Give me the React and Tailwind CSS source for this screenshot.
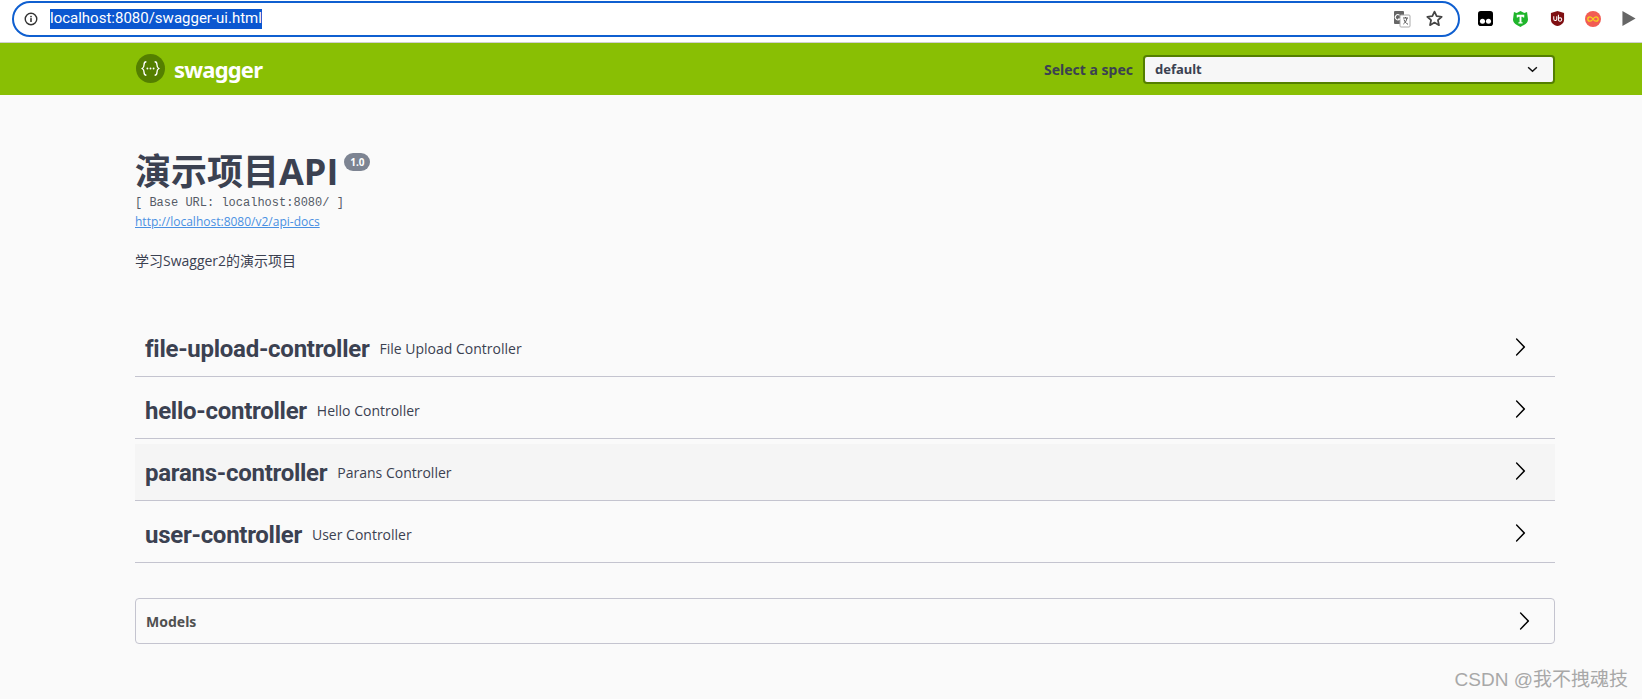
const Chevron = ({ className = "" }) => (
  <svg viewBox="0 0 20 20" className={"w-5 h-5 fill-black " + className}>
    <path d="M13.25 10L6.109 2.58a.697.697 0 0 1 0-.979.68.68 0 0 1 .969 0l7.83 7.908a.697.697 0 0 1 0 .979l-7.83 7.908a.68.68 0 0 1-.969 0 .697.697 0 0 1 0-.979L13.25 10z" />
  </svg>
);

const Row = ({ name, desc, hover }) => (
  <div className={"flex items-center h-[56px] mb-[5px] pl-[10px] pr-[25px] border-b border-[#c4c4cf] box-content " + (hover ? "bg-[#f5f5f5]" : "")}>
    <span className="mt-[2px] text-[24px] leading-none font-bold text-[#3b4151] tracking-[-0.27px] font-['Roboto',sans-serif]">{name}</span>
    <span className="ml-[10px] text-[14px] text-[#3b4151] font-['Open_Sans',sans-serif]">{desc}</span>
    <Chevron className="ml-auto mt-[-3px]" />
  </div>
);

export default function App() {
  return (
    <div className="h-[699px] overflow-hidden bg-[#fafafa] font-['Open_Sans','Noto_Sans_CJK_SC',sans-serif]">
      <div className="h-[43px] bg-white border-b border-[#d0d0d0] flex items-center pl-3">
        <div className="w-[1448px] shrink-0 h-[36px] mt-[-5px] rounded-full border-2 border-[#0f5fd0] flex items-center pl-[10px] pr-[14px]">
          <svg viewBox="0 0 16 16" className="w-[14px] h-[14px] shrink-0">
            <circle cx="8" cy="8" r="6.6" fill="none" stroke="#333" strokeWidth="1.6" />
            <rect x="7.1" y="7" width="1.8" height="4.4" fill="#333" />
            <rect x="7.1" y="4.4" width="1.8" height="1.7" fill="#333" />
          </svg>
          <span className="ml-[12px] h-5 flex items-center bg-[#0b57d0] text-white text-[15px] font-['Roboto',sans-serif]">localhost:8080/swagger-ui.html</span>
          <svg viewBox="0 0 18 18" className="w-[18px] h-[18px] ml-auto">
            <rect x="1" y="1" width="10" height="13" rx="1" fill="#666" />
            <rect x="7" y="5" width="10" height="12" rx="1" fill="#fff" stroke="#aaa" />
            <path d="M10 8h5M12.5 7v1M14 8c-.6 3-2 5-3.6 6M11 9.5c.6 2 2 4 4 4.8" fill="none" stroke="#555" strokeWidth="1" />
            <path d="M6.5 5.2A2.6 2.6 0 1 0 6.8 9H5" fill="none" stroke="#fff" strokeWidth="1.1" />
          </svg>
          <svg viewBox="0 0 24 24" className="w-[19px] h-[19px] ml-[14px]" fill="none" stroke="#444" strokeWidth="2.2">
            <path d="M12 3.2l2.7 5.9 6.4.7-4.8 4.3 1.4 6.3L12 17.1l-5.7 3.3 1.4-6.3-4.8-4.3 6.4-.7z" strokeLinejoin="round" />
          </svg>
        </div>
        <div className="flex items-center mt-[-5px] ml-[18px]">
          <svg viewBox="0 0 16 16" className="w-[15px] h-[15px]">
            <path d="M3 0h10a3 3 0 0 1 3 3v10a3 3 0 0 1-3 3H3a3 3 0 0 1-3-3V3a3 3 0 0 1 3-3z" fill="#000" />
            <circle cx="4.8" cy="11" r="2.7" fill="#fff" />
            <circle cx="11.2" cy="11" r="2.7" fill="#fff" />
          </svg>
          <svg viewBox="0 0 16 18" className="w-[15px] h-[17px] ml-[20px]">
            <path d="M1 2l3 1 4-2 4 2 3-1 1 8c0 4-4 6-8 8-4-2-8-4-8-8z" fill="#1fb52b" />
            <path d="M4 5h8v3h-1.2L10 7H9v6h1.2v1.2H5.8V13H7V7H6l-.8 1H4z" fill="#fff" />
          </svg>
          <svg viewBox="0 0 16 18" className="w-[15px] h-[17px] ml-[22px]">
            <path d="M8 1l7 2v7c0 4-3 6-7 7-4-1-7-3-7-7V3z" fill="#7f0f12" />
            <path d="M4 6.5v3a1.6 1.6 0 0 0 3.2 0v-3M9 5v6M9 9.5a1.8 1.8 0 1 0 3.4 0 1.8 1.8 0 0 0-3.4 0" fill="none" stroke="#fff" strokeWidth="1.1" />
          </svg>
          <svg viewBox="0 0 16 16" className="w-4 h-4 ml-[20px]">
            <circle cx="8" cy="8" r="8" fill="#f25c54" />
            <path d="M8 8c-1-1.6-2-2.2-3-2.2a2.2 2.2 0 0 0 0 4.4c1 0 2-.6 3-2.2s2-2.2 3-2.2a2.2 2.2 0 0 1 0 4.4c-1 0-2-.6-3-2.2z" fill="none" stroke="#f6d21f" strokeWidth="1.3" />
          </svg>
          <svg viewBox="0 0 14 16" className="w-[14px] h-[15px] ml-[21px]">
            <path d="M0 0l14 8-14 8z" fill="#666" />
          </svg>
        </div>
      </div>

      <div className="h-[52px] bg-[#89bf04]">
        <div className="w-[1420px] ml-[135px] h-full flex items-center">
          <svg viewBox="0 0 28 28" className="ml-[1px] w-[29px] h-[29px] shrink-0 mt-[-1px]">
            <circle cx="14" cy="14" r="14" fill="#547f00" />
            <path d="M10 7.5c-2 0-2.2 1-2.2 2.6 0 1.800-.3 3-1.800 3.900 1.500.9 1.800 2.100 1.800 3.900 0 1.600.2 2.600 2.200 2.600M18 7.500c2 0 2.200 1 2.200 2.600 0 1.800.3 3 1.800 3.900-1.500.9-1.800 2.100-1.800 3.900 0 1.600-.2 2.600-2.200 2.600" fill="none" stroke="#fff" strokeWidth="1.3" />
            <circle cx="11" cy="14" r=".9" fill="#fff" /><circle cx="14" cy="14" r=".9" fill="#fff" /><circle cx="17" cy="14" r=".9" fill="#fff" />
          </svg>
          <span className="ml-[9px] text-[22px] font-bold text-white leading-none font-['Noto_Sans',sans-serif] tracking-[-0.8px]">swagger</span>
          <span className="ml-auto text-[14px] font-bold text-[#3b4151] font-['Noto_Sans',sans-serif]">Select a spec</span>
          <div className="ml-[10px] w-[412px] h-[29px] bg-[#f7f7f7] border-2 border-[#547f00] rounded-[4px] flex items-center pl-[10px] pr-[15px] text-[13px] font-bold text-[#3b4151] font-['Noto_Sans',sans-serif]">
            <span className="mt-[1px]">default</span>
            <svg viewBox="0 0 12 8" className="w-[11px] h-[7px] ml-auto" fill="none" stroke="#111" strokeWidth="1.7"><path d="M1 1.500l5 4.500 5-4.500" /></svg>
          </div>
        </div>
      </div>

      <div className="w-[1420px] ml-[135px]">
        <div className="pt-[59px] flex items-start h-[101px]">
          <h1 className="text-[36px] leading-[36px] font-bold text-[#3b4151] font-['Open_Sans','Noto_Sans_CJK_SC',sans-serif]">演示项目API</h1>
          <span className="ml-[6px] mt-[-1px] h-[18px] w-[26px] rounded-full bg-[#7d8492] text-white text-[10px] font-bold flex items-center justify-center font-['Noto_Sans',sans-serif]">1.0</span>
        </div>
        <div className="text-[12px] leading-[14px] text-[#555a66] font-['Liberation_Mono',monospace]">[ Base URL: localhost:8080/ ]</div>
        <a className="block mt-[4px] text-[12px] leading-[16px] text-[#4990e2] underline font-['Open_Sans',sans-serif]">http://localhost:8080/v2/api-docs</a>
        <p className="mt-[21px] text-[14px] leading-[20px] text-[#3b4151]">学习Swagger2的演示项目</p>

        <div className="mt-[49px]">
          <Row name="file-upload-controller" desc="File Upload Controller" />
          <Row name="hello-controller" desc="Hello Controller" />
          <Row name="parans-controller" desc="Parans Controller" hover />
          <Row name="user-controller" desc="User Controller" />
        </div>

        <div className="mt-[35px] h-[46px] border border-[#c4c4cf] rounded-[4px] flex items-center pl-[10px] pr-[20px]">
          <span className="text-[14px] font-bold text-[#505050] font-['Noto_Sans',sans-serif]">Models</span>
          <Chevron className="ml-auto" />
        </div>
      </div>

      <div className="absolute right-[14px] top-[668px] text-[19px] leading-6 text-[#a8a8a8] font-['Liberation_Sans','Noto_Sans_CJK_SC',sans-serif]">CSDN @我不拽魂技</div>
    </div>
  );
}
